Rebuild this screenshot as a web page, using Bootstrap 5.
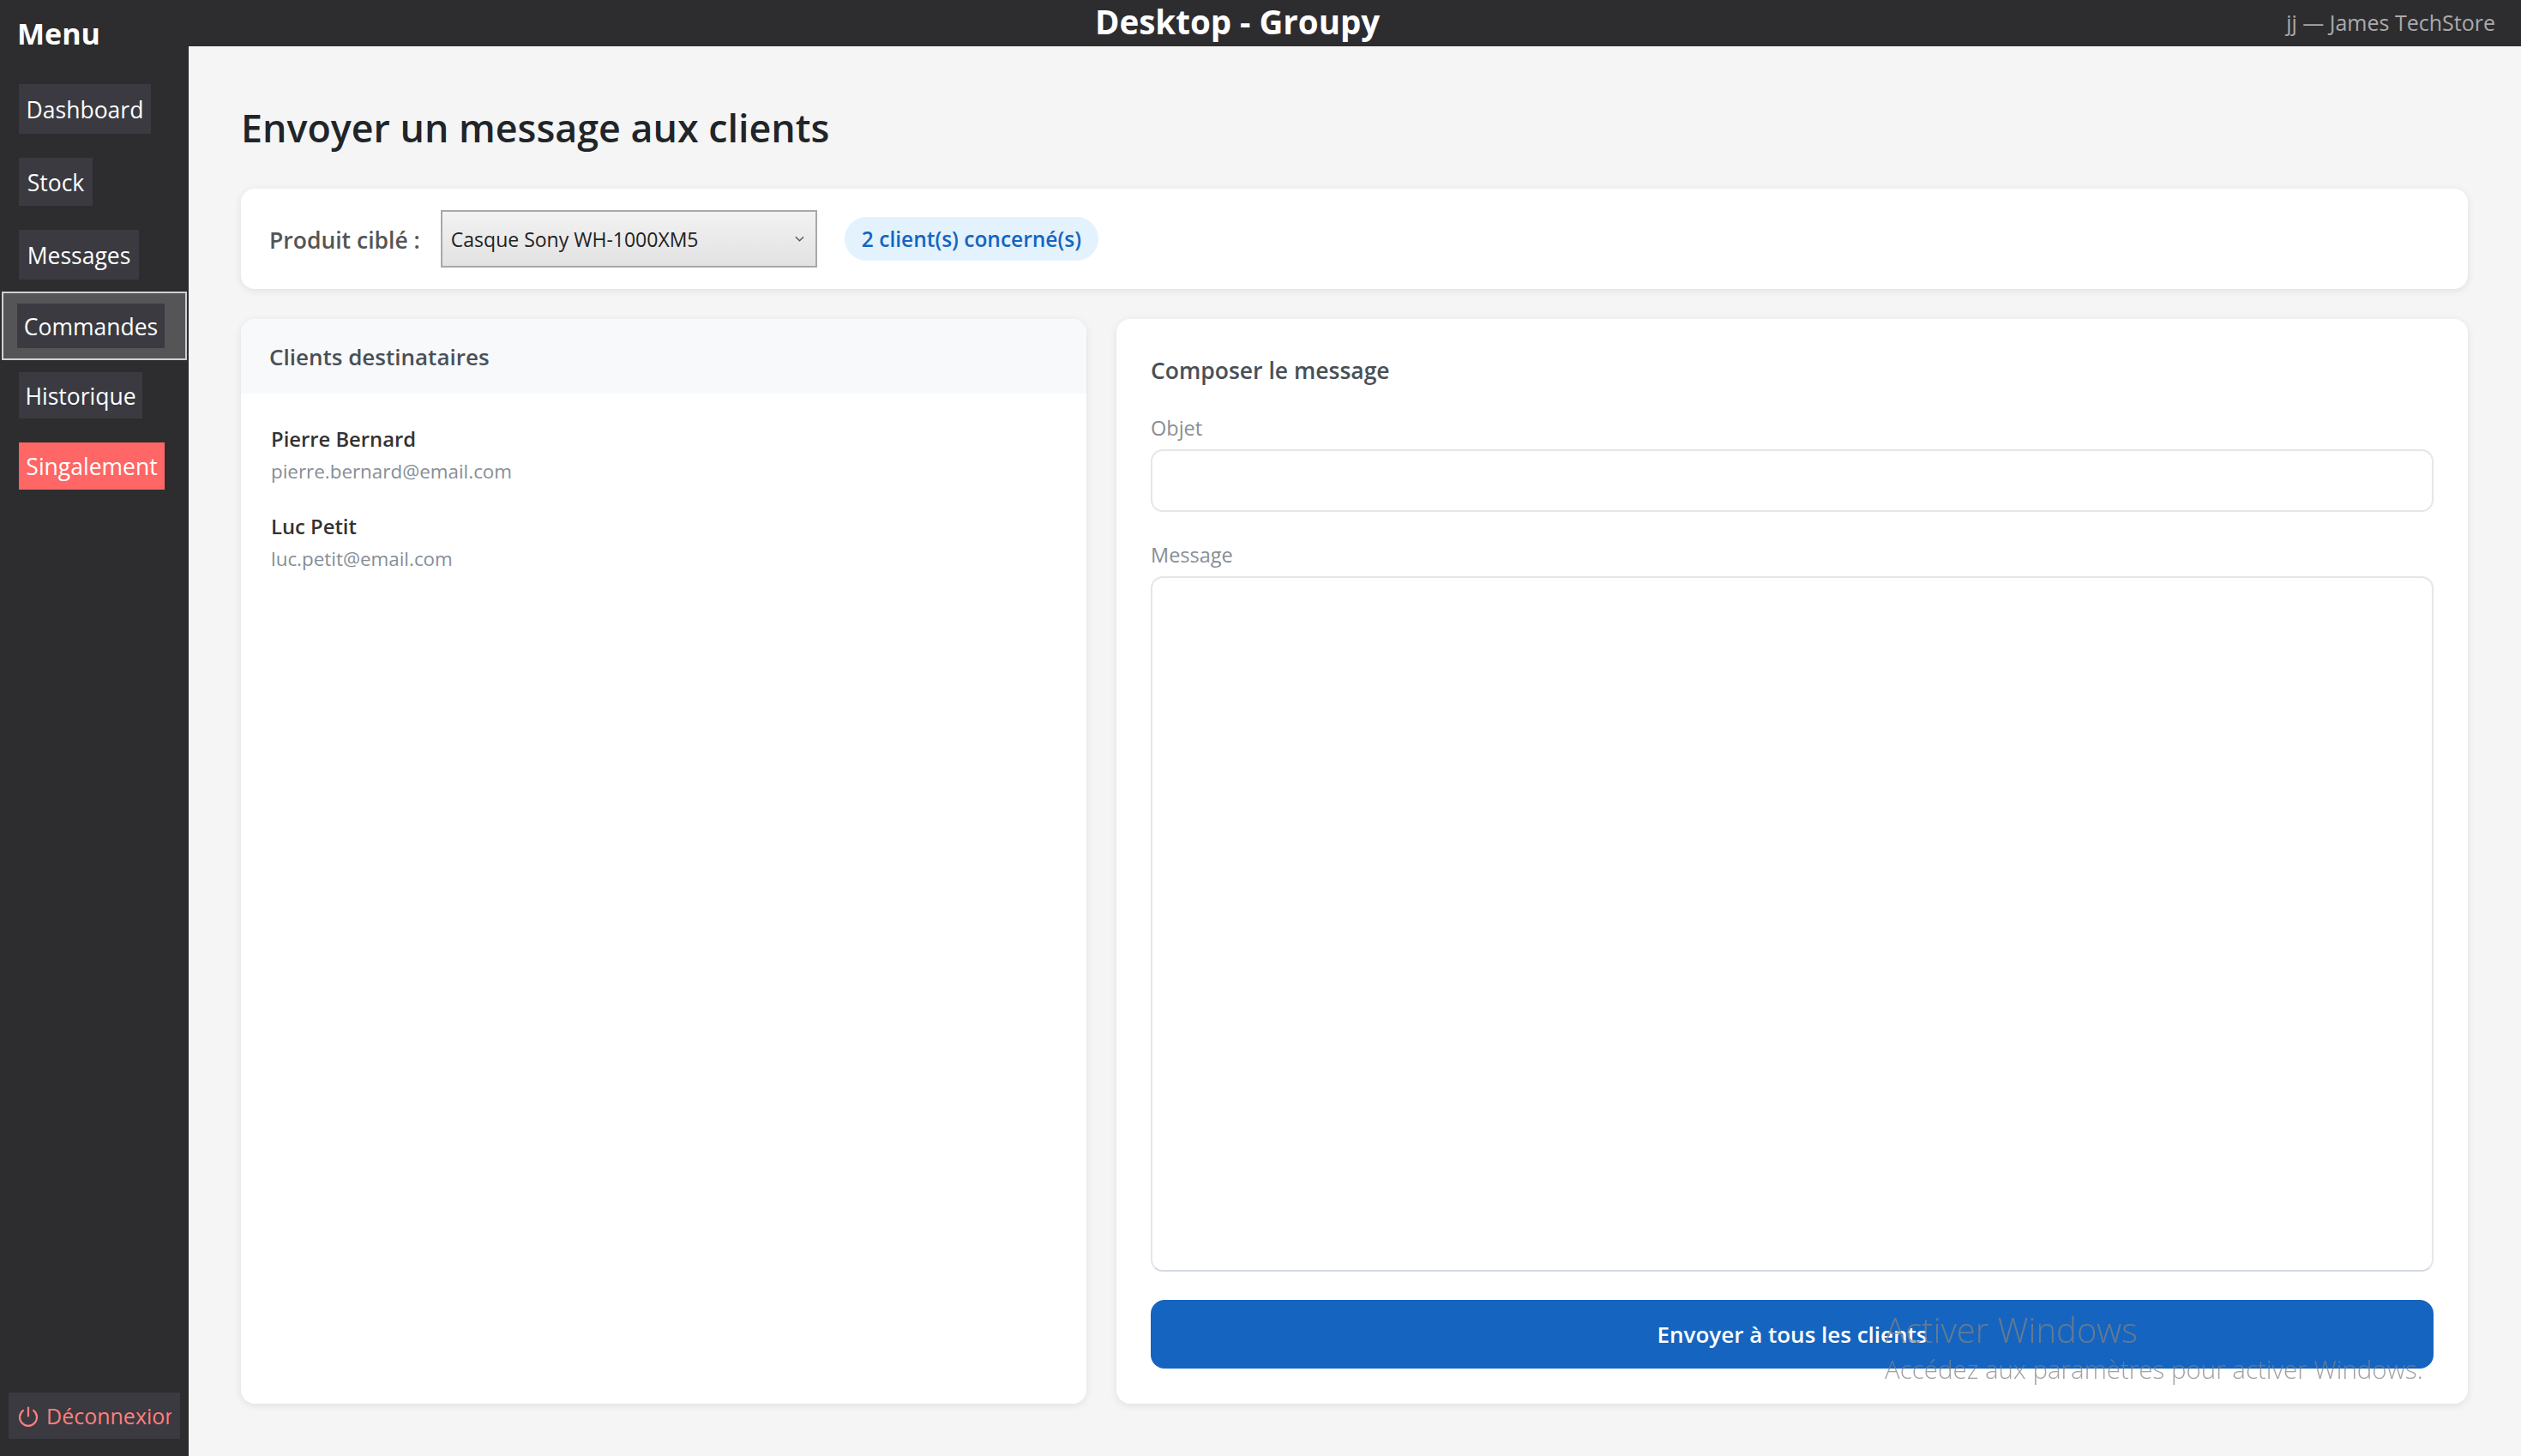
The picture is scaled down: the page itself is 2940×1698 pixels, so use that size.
<!DOCTYPE html>
<html lang="fr">
<head>
  <meta charset="UTF-8" />
  <title>Desktop - Groupy</title>
  <link href="https://cdn.jsdelivr.net/npm/bootstrap@5.3.0/dist/css/bootstrap.min.css" rel="stylesheet" />
  <style>
    html, body { height: 100%; }
    body { font-family: "Open Sans", "Noto Sans", sans-serif; background: #f5f5f5; color: #2b2b2b; overflow: hidden; }

    .side-panel { width: 220px; background: #2d2d30; color: #fff; flex: 0 0 220px; }
    .side-title { font-size: 34px; font-weight: 700; line-height: 46px; padding: 16px 0 0 20px; margin-bottom: 22px; }
    .side-item { padding: 14px 0 14px 22px; }
    .side-item.is-current { margin: 0 2px; padding: 12px 0 12px 16px; background: #555558; border: 2px solid #d0d0d0; }
    .side-link { display: inline-flex; align-items: center; justify-content: center; padding: 3px 0 0; background: #3a3a40; color: #fff; font-size: 26.5px; border: 0; border-radius: 0; }
    .side-link:hover { background: #3a3a40; color: #fff; }
    .side-link.is-alert, .side-link.is-alert:hover { background: #ff6666; }
    .side-item:nth-child(1) .side-link { width: 154px; height: 58px; }
    .side-item:nth-child(2) .side-link { width: 86px; height: 56px; }
    .side-item:nth-child(3) .side-link { width: 140px; height: 58px; }
    .side-item:nth-child(4) .side-link { width: 172px; height: 52px; }
    .side-item:nth-child(5) .side-link { width: 144px; height: 54px; }
    .side-item:nth-child(6) .side-link { width: 170px; height: 55px; }
    .side-logout { margin: 0 10px 20px; height: 54px; width: 200px; padding: 2px 10px 0 11px; background: #3a3a40; color: #ff7f7f; font-size: 25px; border-radius: 0; border: 0; white-space: nowrap; justify-content: flex-start; gap: 9px; }
    .side-logout:hover { background: #3a3a40; color: #ff7f7f; }
    .side-logout svg { flex: 0 0 24px; }
    .side-logout span { min-width: 0; overflow: hidden; }

    .top-strip { height: 54px; background: #2d2d30; padding-right: 30px; flex: 0 0 54px; }
    .top-name { font-size: 38.5px; font-weight: 700; color: #fff; line-height: 50px; padding-bottom: 4px; }
    .top-user { font-size: 25px; color: #aaa; }

    .page-body { padding: 62px 62px 61px 61px; min-height: 0; }
    .page-heading { font-size: 44.8px; font-weight: 600; line-height: 65px; color: #212529; margin: 0 0 39px; }

    .soft-card { border: 0; border-radius: 16px; box-shadow: 0 2px 10px rgba(0, 0, 0, .09); background: #fff; overflow: hidden; }
    .filter-card { height: 117px; padding: 0 33px; gap: 24px; margin-bottom: 35px; flex: 0 0 117px; }
    .filter-label { font-size: 26.5px; font-weight: 600; color: #555; margin: 4px 0 0; }
    .product-select { width: 439px; height: 67px; padding: 2px 10px 0; font-size: 23px; color: #222; border: 2px solid #a8a8a8; border-radius: 0; appearance: none; background: url("data:image/svg+xml,%3Csvg xmlns='http://www.w3.org/2000/svg' viewBox='0 0 12 8'%3E%3Cpath d='M1 1l5 5 5-5' fill='none' stroke='%23555' stroke-width='1.5'/%3E%3C/svg%3E") no-repeat right 13px center / 11px 8px, linear-gradient(#f2f2f2, #e2e2e2); }
    .count-pill { height: 51px; padding: 2px 20px 0; margin-left: 8px; border-radius: 26px; background: #e3f2fd; color: #1565c0; font-size: 24.5px; font-weight: 600; }

    .card-row { gap: 35px; min-height: 0; }
    .list-card { flex: 0 0 986px; }
    .list-head { height: 87px; padding: 2px 33px 0; background: #f8f9fa; font-size: 26px; font-weight: 600; color: #495057; }
    .client-list { padding: 34px 35px; }
    .client-row { margin-bottom: 26px; }
    .client-name { font-size: 23.8px; font-weight: 600; color: #333; line-height: 38px; }
    .client-mail { font-size: 22.4px; color: #868e96; line-height: 38px; }

    .compose-card { padding: 40px 40px 41px; }
    .compose-title { font-size: 26.5px; font-weight: 600; color: #495057; line-height: 40px; margin-bottom: 29px; }
    .compose-label { font-size: 23.5px; font-weight: 500; color: #868e96; line-height: 36px; margin-bottom: 7px; }
    .compose-input { height: 73px; flex: 0 0 73px; border: 2px solid #e3e7eb; border-radius: 14px; margin-bottom: 32px; }
    .compose-area { border: 2px solid #e3e7eb; border-bottom-color: #d5dbe1; border-radius: 14px; resize: none; margin-bottom: 33px; }
    .send-btn { height: 80px; background: #1565c0; border: 0; border-radius: 16px; color: #fff; font-size: 26px; font-weight: 600; flex: 0 0 80px; padding-top: 6px; }
    .send-btn:hover { background: #1565c0; color: #fff; }

    /* filigrane par-dessus le bouton */
    .win-mark { position: fixed; left: 2198px; top: 1523px; color: rgba(130, 130, 130, .75); pointer-events: none; font-weight: 300; white-space: nowrap; }
    .win-mark-big { font-size: 40px; line-height: 56px; }
    .win-mark-small { font-size: 29.5px; line-height: 34px; margin-top: 1px; }
  </style>
</head>
<body class="d-flex">
  <aside class="side-panel d-flex flex-column">
    <div class="side-title">Menu</div>
    <nav class="d-flex flex-column">
      <div class="side-item"><a class="btn side-link" href="#">Dashboard</a></div>
      <div class="side-item"><a class="btn side-link" href="#">Stock</a></div>
      <div class="side-item"><a class="btn side-link" href="#">Messages</a></div>
      <div class="side-item is-current"><a class="btn side-link" href="#">Commandes</a></div>
      <div class="side-item"><a class="btn side-link" href="#">Historique</a></div>
      <div class="side-item"><a class="btn side-link is-alert" href="#">Singalement</a></div>
    </nav>
    <a class="btn side-logout d-flex align-items-center mt-auto" href="#">
      <svg width="24" height="24" viewBox="0 0 24 24" fill="none" stroke="#ff7f7f" stroke-width="2.2" stroke-linecap="round"><path d="M12 1.5v10"/><path d="M6 4.8a10 10 0 1 0 12 0"/></svg>
      <span>Déconnexion</span>
    </a>
  </aside>

  <div class="flex-grow-1 d-flex flex-column overflow-hidden">
    <header class="top-strip d-flex align-items-center">
      <span class="top-name mx-auto">Desktop - Groupy</span>
      <span class="top-user">jj — James TechStore</span>
    </header>

    <main class="page-body flex-grow-1 d-flex flex-column">
      <h1 class="page-heading">Envoyer un message aux clients</h1>

      <div class="soft-card filter-card d-flex align-items-center">
        <label class="filter-label" for="produit">Produit ciblé :</label>
        <select id="produit" class="product-select">
          <option>Casque Sony WH-1000XM5</option>
        </select>
        <span class="count-pill d-inline-flex align-items-center">2 client(s) concerné(s)</span>
      </div>

      <div class="d-flex flex-grow-1 card-row">
        <section class="soft-card list-card d-flex flex-column">
          <div class="list-head d-flex align-items-center">Clients destinataires</div>
          <div class="client-list">
            <div class="client-row">
              <div class="client-name">Pierre Bernard</div>
              <div class="client-mail">pierre.bernard@email.com</div>
            </div>
            <div class="client-row">
              <div class="client-name">Luc Petit</div>
              <div class="client-mail">luc.petit@email.com</div>
            </div>
          </div>
        </section>

        <section class="soft-card compose-card flex-grow-1 d-flex flex-column">
          <div class="compose-title">Composer le message</div>
          <label class="compose-label" for="objet">Objet</label>
          <input id="objet" class="form-control compose-input" type="text" />
          <label class="compose-label" for="message">Message</label>
          <textarea id="message" class="form-control compose-area flex-grow-1"></textarea>
          <button class="btn send-btn w-100">Envoyer à tous les clients</button>
        </section>
      </div>
    </main>
  </div>

  <div class="win-mark">
    <div class="win-mark-big">Activer Windows</div>
    <div class="win-mark-small">Accédez aux paramètres pour activer Windows.</div>
  </div>
</body>
</html>
